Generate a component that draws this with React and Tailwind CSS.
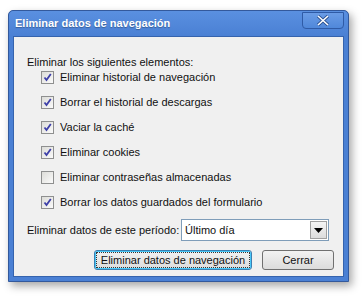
import React from "react";

const items = [
  { label: "Eliminar historial de navegación", checked: true },
  { label: "Borrar el historial de descargas", checked: true },
  { label: "Vaciar la caché", checked: true },
  { label: "Eliminar cookies", checked: true },
  { label: "Eliminar contraseñas almacenadas", checked: false },
  { label: "Borrar los datos guardados del formulario", checked: true },
];

function Check({ checked }) {
  return (
    <span className="w-[13px] h-[13px] border border-[#8e8f8f] bg-gradient-to-br from-[#dcdcd8] to-[#fbfbfb] flex items-center justify-center shrink-0">
      {checked && (
        <svg width="9" height="9" viewBox="0 0 9 9">
          <path d="M1.5 4.5 L3.5 7 L7.8 1" fill="none" stroke="#3d3fa8" strokeWidth="1.8" />
        </svg>
      )}
    </span>
  );
}

export default function App() {
  return (
    <div className="w-[363px] h-[296px] bg-white pl-[8px] pt-[10px] font-['Liberation_Sans',Arial,sans-serif] text-[11px] text-[#111] whitespace-nowrap">
      <div className="w-[341px] h-[272px] rounded-t-[5px] bg-[#4a80d4] border border-[#33599c] shadow-[3px_4px_8px_rgba(0,0,0,0.35)] flex flex-col">
        <div className="h-[25px] flex items-center justify-between pl-[6px] pr-[4px] rounded-t-[5px] bg-gradient-to-b from-[#5a90e0] to-[#4a80d4]">
          <span className="text-white font-bold text-[11px] [text-shadow:0_1px_1px_rgba(0,0,0,0.3)]">Eliminar datos de navegación</span>
          <span className="w-[42px] h-[17px] -mt-[7px] rounded-b-[4px] border border-[#2f5ba6] bg-gradient-to-b from-[#6a9ce6] to-[#5088da] flex items-center justify-center">
            <svg width="14" height="11" viewBox="0 0 14 11">
              <path d="M2 1 L12 10 M12 1 L2 10" stroke="#2a4f8e" strokeWidth="3.2" />
              <path d="M2 1 L12 10 M12 1 L2 10" stroke="#ffffff" strokeWidth="1.6" />
            </svg>
          </span>
        </div>
        <div className="flex-1 mx-[4px] mb-[4px] border border-[#3563ad] bg-[#f0f0f0] pl-[13px] pr-[14px] pt-[18px] flex flex-col">
          <div className="h-[14px] flex items-center">Eliminar los siguientes elementos:</div>
          <div className="flex flex-col pl-[14px] mt-[1px] gap-[10px]">
            {items.map((it) => (
              <div key={it.label} className="h-[15px] flex items-center gap-[6px]">
                <Check checked={it.checked} />
                <span>{it.label}</span>
              </div>
            ))}
          </div>
          <div className="mt-[9px] flex items-center justify-between">
            <span>Eliminar datos de este período:</span>
            <div className="w-[148px] h-[22px] shrink-0 border border-[#7f9db9] bg-white flex items-center justify-between pl-[3px] pr-[1px]">
              <span>Último día</span>
              <span className="w-[17px] h-[18px] border border-[#a0a0a0] bg-gradient-to-b from-[#f4f4f4] to-[#dcdcdc] flex items-center justify-center">
                <svg width="9" height="5" viewBox="0 0 9 5">
                  <path d="M0 0 H9 L4.5 5 Z" fill="#000" />
                </svg>
              </span>
            </div>
          </div>
          <div className="mt-[9px] -mr-[5px] flex justify-end gap-[10px]">
            <button className="w-[158px] h-[20px] shrink-0 rounded-[3px] border border-[#3c7fb1] bg-gradient-to-b from-[#f2f2f2] to-[#dcdcdc] shadow-[inset_0_0_0_1px_#48c8f8] flex items-center justify-center">
              <span className="outline outline-1 outline-dotted outline-[#333] px-[4px] leading-[14px]">Eliminar datos de navegación</span>
            </button>
            <button className="w-[72px] h-[20px] shrink-0 rounded-[3px] border border-[#707070] bg-gradient-to-b from-[#f2f2f2] to-[#dcdcdc] flex items-center justify-center">
              Cerrar
            </button>
          </div>
        </div>
      </div>
    </div>
  );
}
